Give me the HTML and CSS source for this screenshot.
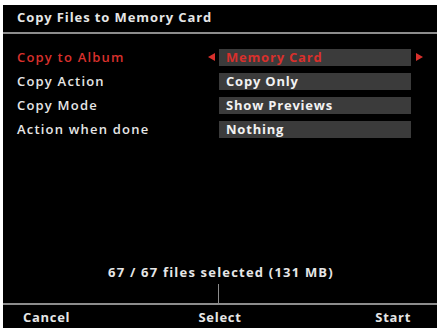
FILE: index.html
```html
<!DOCTYPE html>
<html lang="en">
<head>
    <meta charset="UTF-8">
    <title>Copy Files to Memory Card</title>
    <link rel="stylesheet" href="styles.css">
</head>
<body>
    <div class="screen">
        <div class="title">Copy Files to Memory Card</div>

        <div class="options">
            <div class="option active">
                <span class="label">Copy to Album</span>
                <span class="arrow left"></span>
                <span class="value">Memory Card</span>
                <span class="arrow right"></span>
            </div>
            <div class="option">
                <span class="label">Copy Action</span>
                <span class="arrow"></span>
                <span class="value">Copy Only</span>
                <span class="arrow"></span>
            </div>
            <div class="option">
                <span class="label">Copy Mode</span>
                <span class="arrow"></span>
                <span class="value">Show Previews</span>
                <span class="arrow"></span>
            </div>
            <div class="option">
                <span class="label">Action when done</span>
                <span class="arrow"></span>
                <span class="value">Nothing</span>
                <span class="arrow"></span>
            </div>
        </div>

        <div class="status">67 / 67 files selected (131 MB)</div>
        <div class="tick"></div>

        <div class="buttons">
            <span class="btn-left">Cancel</span>
            <span class="btn-mid">Select</span>
            <span class="btn-right">Start</span>
        </div>
    </div>
</body>
</html>
```

FILE: styles.css
```css
:root {
    --text-color: #e6e6e6;
    --accent-color: #d8302c;
    --line-color: #8c8c8c;
    --box-color: #3b3b3b;
}

body {
    margin: 0;
    background: #fff;
    font-family: "Open Sans", "DejaVu Sans", sans-serif;
}

.screen {
    margin: 5px 0 0 3px;
    height: 323px;
    background: #000;
    color: var(--text-color);
    display: flex;
    flex-direction: column;
}

.title {
    height: 27px;
    padding-left: 14px;
    font-size: 13px;
    font-weight: bold;
    letter-spacing: 0.9px;
    line-height: 25px;
    border-bottom: 2px solid var(--line-color);
}

.options {
    margin-top: 14px;
    display: flex;
    flex-direction: column;
    gap: 7px;
}

.option {
    display: grid;
    grid-template-columns: 176px 26px 192px 12px;
    align-items: center;
    height: 17px;
    padding-left: 14px;
    font-size: 13px;
}

.label {
    font-weight: 600;
    letter-spacing: 1.2px;
}

.value {
    height: 17px;
    line-height: 17px;
    padding-left: 7px;
    background: var(--box-color);
    font-weight: bold;
    letter-spacing: 0.8px;
    color: #f2f2f2;
}

.option.active .label,
.option.active .value {
    color: var(--accent-color);
}

.arrow.left,
.arrow.right {
    width: 0;
    height: 0;
    border-top: 4px solid transparent;
    border-bottom: 4px solid transparent;
}

.arrow.left {
    justify-self: end;
    margin-right: 4px;
    border-right: 7px solid var(--accent-color);
}

.arrow.right {
    justify-self: end;
    border-left: 7px solid var(--accent-color);
}

.status {
    margin-top: auto;
    margin-left: 2px;
    text-align: center;
    font-size: 13px;
    font-weight: bold;
    letter-spacing: 1.2px;
    line-height: 18px;
}

.tick {
    width: 1px;
    height: 19px;
    margin: 3px 0 0 215px;
    background: var(--line-color);
}

.buttons {
    height: 23px;
    border-top: 2px solid var(--line-color);
    display: grid;
    grid-template-columns: 1fr auto 1fr;
    align-items: center;
    padding: 0 26px 0 20px;
    font-size: 13px;
    font-weight: bold;
    letter-spacing: 0.7px;
}

.btn-mid {
    margin-left: 6px;
}

.btn-right {
    justify-self: end;
}
```
